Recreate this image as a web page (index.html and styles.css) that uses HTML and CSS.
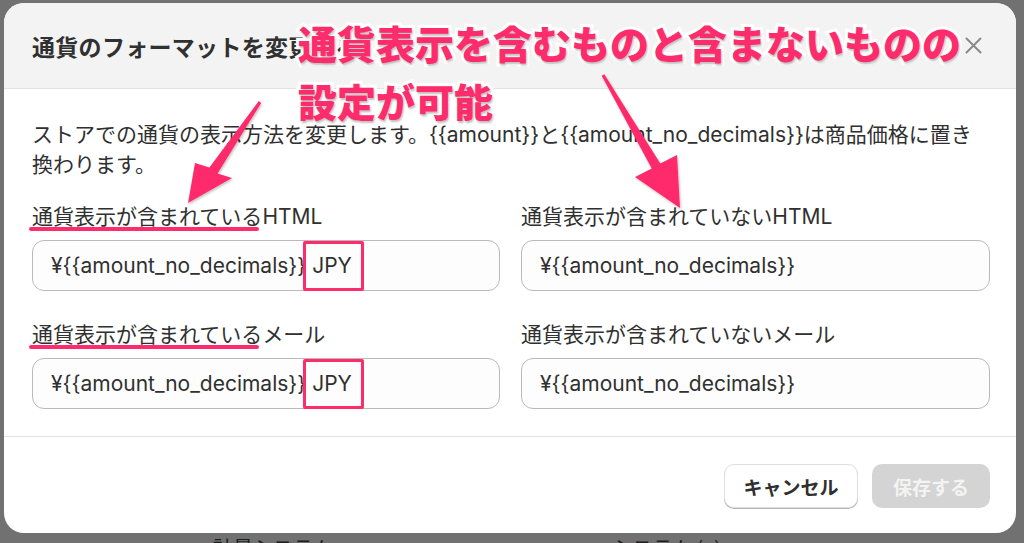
FILE: index.html
```html
<!DOCTYPE html>
<html lang="ja">
<head>
<meta charset="utf-8">
<title>通貨のフォーマットを変更</title>
<link rel="stylesheet" href="styles.css">
</head>
<body>
<div class="modal">
  <div class="modal-header">
    <h2 class="title">通貨のフォーマットを変更する</h2>
    <button class="close" aria-label="閉じる">
      <svg width="17" height="17" viewBox="0 0 17 17"><path d="M1.5 1.5 L15.5 15.5 M15.5 1.5 L1.5 15.5" stroke="#8a8a8a" stroke-width="2" stroke-linecap="round"/></svg>
    </button>
  </div>
  <div class="modal-body">
    <p class="desc">ストアでの通貨の表示方法を変更します。{{amount}}と{{amount_no_decimals}}は商品価格に置き換わります。</p>
    <div class="fields">
      <div class="field">
        <div class="label"><span class="mark">通貨表示が含まれている</span>HTML</div>
        <div class="input">¥{{amount_no_decimals}} <span class="box">JPY</span></div>
      </div>
      <div class="field">
        <div class="label">通貨表示が含まれていないHTML</div>
        <div class="input">¥{{amount_no_decimals}}</div>
      </div>
      <div class="field">
        <div class="label"><span class="mark">通貨表示が含まれている</span>メール</div>
        <div class="input">¥{{amount_no_decimals}} <span class="box">JPY</span></div>
      </div>
      <div class="field">
        <div class="label">通貨表示が含まれていないメール</div>
        <div class="input">¥{{amount_no_decimals}}</div>
      </div>
    </div>
  </div>
  <div class="modal-footer">
    <button class="btn">キャンセル</button>
    <button class="btn btn-primary" disabled>保存する</button>
  </div>
</div>
<div class="behind">
  <span class="behind-a">計量システム</span>
  <span class="behind-b">システム (g)</span>
</div>

<div class="annot">通貨表示を含むものと含まないものの<br>設定が可能</div>
<svg class="arrows" width="1024" height="543" viewBox="0 0 1024 543">
  <defs>
    <filter id="sh" x="-20%" y="-20%" width="140%" height="140%">
      <feDropShadow dx="1" dy="1.5" stdDeviation="1.2" flood-color="#000" flood-opacity="0.25"/>
    </filter>
  </defs>
  <polygon filter="url(#sh)" fill="#fe2c6c" points="258.8,101.1 261.2,102.9 217.6,173.4 232,178 188,203 195,163 209.4,167.6"/>
  <polygon filter="url(#sh)" fill="#fe2c6c" points="601.7,75.8 604.3,74.2 660.3,163.5 677,155 680,208 635,177 651.7,168.5"/>
</svg>
</body>
</html>
```
FILE: styles.css
```css
* { box-sizing: border-box; }
html, body { margin: 0; padding: 0; }
body {
  width: 1024px;
  height: 543px;
  overflow: hidden;
  background: #717171;
  font-family: Inter, "Noto Sans CJK JP", sans-serif;
  color: #303030;
  position: relative;
}
.modal {
  margin: 3px 0 0 4px;
  width: 1012px;
  height: 530px;
  background: #fff;
  border-radius: 20px;
  overflow: hidden;
  display: flex;
  flex-direction: column;
}
.modal-header {
  height: 86px;
  background: #f3f3f3;
  border-bottom: 1px solid #e2e2e2;
  display: flex;
  align-items: center;
  justify-content: space-between;
  padding: 0 34px 0 28px;
}
.title {
  margin: 0;
  font-size: 23px;
  font-weight: 600;
  color: #303030;
  font-family: "Noto Sans CJK JP", sans-serif;
  letter-spacing: 0.3px;
}
.close {
  border: 0;
  background: none;
  padding: 0;
  width: 17px;
  height: 17px;
  display: flex;
}
.modal-body {
  padding: 31px 26px 27px 28px;
  border-bottom: 1px solid #e3e3e3;
}
.desc {
  margin: 0 0 22px;
  font-size: 21px;
  line-height: 30px;
}
.fields {
  display: grid;
  grid-template-columns: 468px 469px;
  column-gap: 21px;
  row-gap: 29px;
}
.label {
  font-size: 21px;
  line-height: 30px;
  margin-bottom: 8px;
}
.mark { position: relative; }
.mark::after {
  content: "";
  position: absolute;
  left: -3px;
  right: 3px;
  bottom: -2px;
  height: 4.5px;
  border-radius: 3px;
  background: #fe2c6c;
}
.input {
  height: 51px;
  border: 1px solid #bababa;
  border-radius: 12px;
  background: #fdfdfd;
  font-size: 21px;
  line-height: 49px;
  padding-left: 18px;
  color: #303030;
}
.box { position: relative; }
.box::after {
  content: "";
  position: absolute;
  left: -9px;
  right: -12px;
  top: -12px;
  bottom: -13px;
  border: 3.5px solid #fe2c6c;
  border-radius: 2px;
}
.modal-footer {
  flex: 1;
  display: flex;
  justify-content: flex-end;
  align-items: flex-start;
  gap: 14px;
  padding: 27px 26px 0 0;
}
.btn {
  height: 44px;
  border-radius: 10px;
  font-family: "Noto Sans CJK JP", sans-serif;
  font-size: 19px;
  font-weight: 700;
  padding: 0;
  cursor: pointer;
}
.btn:not(.btn-primary) {
  width: 134px;
  background: #fff;
  color: #303030;
  border: 1px solid #dedede;
  box-shadow: 0 1px 0 #b5b5b5;
}
.btn-primary {
  width: 118px;
  background: #d4d4d4;
  color: #f3f3f3;
  border: 0;
}
.behind {
  margin-top: 5px;
  height: 20px;
  font-family: "Noto Sans CJK JP", sans-serif;
  font-size: 20px;
  line-height: 20px;
  color: #1e1e1e;
  display: flex;
  padding-left: 213px;
}
.behind-b { margin-left: 280px; }
.annot {
  position: absolute;
  left: 298px;
  top: 13px;
  font-family: "Noto Sans CJK JP", sans-serif;
  font-weight: 900;
  font-size: 39px;
  line-height: 58px;
  color: #fe2c6c;
  -webkit-text-stroke: 6px #fff;
  paint-order: stroke fill;
  text-shadow: 1px 2px 2px rgba(0,0,0,0.25);
  white-space: nowrap;
}
.arrows {
  position: absolute;
  left: 0;
  top: 0;
  pointer-events: none;
}
```
